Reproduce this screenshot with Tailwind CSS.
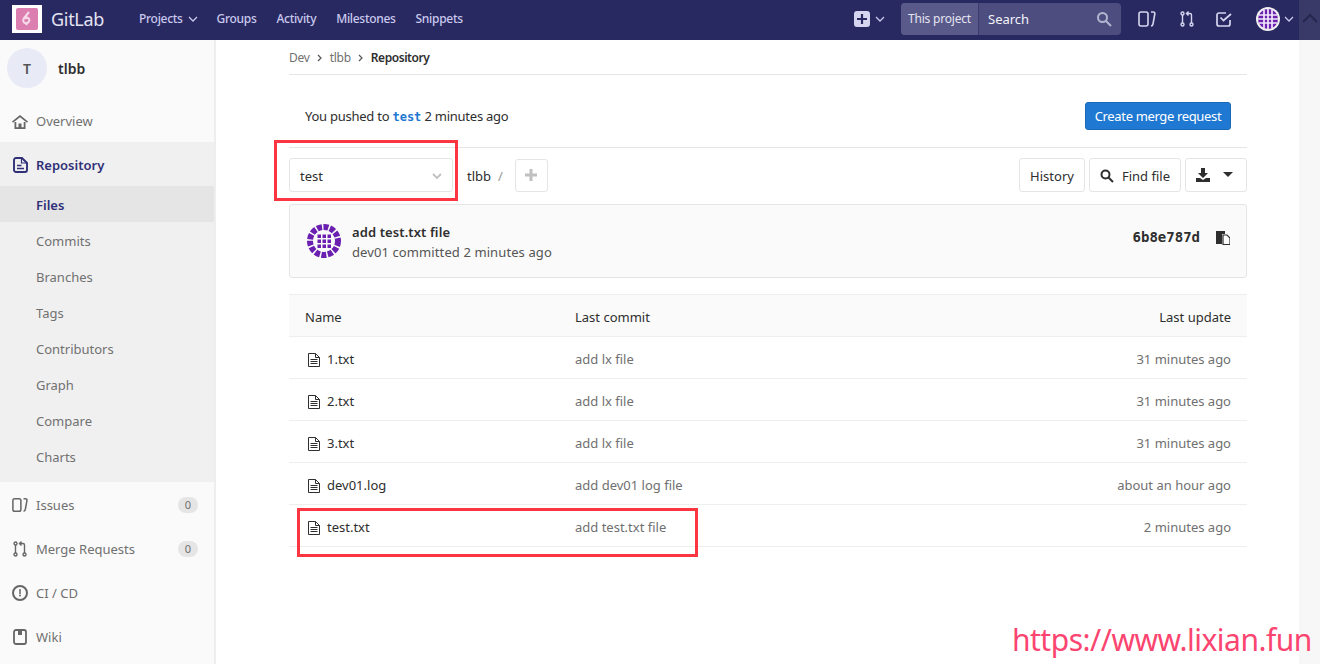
<!DOCTYPE html>
<html lang="en">

<head>
  <meta charset="UTF-8">
  <title>Files · tlbb · GitLab</title>
  <script src="https://cdn.jsdelivr.net/npm/@tailwindcss/browser@4"></script>
</head>

<body class="relative h-[664px] w-[1320px] overflow-hidden bg-white font-['Noto_Sans',sans-serif] text-[13px] text-[#2e2e2e]">

  <!-- top nav -->
  <header class="relative flex h-10 w-full items-center bg-[#292961] pb-[2px]">
    <div class="ml-3 flex h-[28px] w-[30px] items-center justify-center bg-white">
      <svg width="22" height="22" viewBox="0 0 22 22">
        <rect width="22" height="22" rx="2" fill="#dc7fb0" />
        <path d="M13 4 8 10c-2 3 0 6 3 5s3-4 1-5-3 1-3 1M10 17l2-3" fill="none" stroke="#f6dcea" stroke-width="2" />
      </svg>
    </div>
    <span class="ml-[9px] text-[18px] tracking-[-0.3px] text-[#e4e4f2]">GitLab</span>
    <nav class="ml-[35px] flex items-center text-[12px] font-medium tracking-[-0.3px] text-[#c9c9ee]">
      <span class="flex items-center gap-[5px]">Projects
        <svg width="10" height="10" viewBox="0 0 10 10" fill="none" stroke="#c9c9ee" stroke-width="1.3"><path d="M1 3l4 4 4-4" /></svg>
      </span>
      <span class="ml-[19px]">Groups</span>
      <span class="ml-[20px]">Activity</span>
      <span class="ml-[20px]">Milestones</span>
      <span class="ml-[20px]">Snippets</span>
    </nav>
    <div class="ml-auto mr-[26px] flex items-center">
      <div class="flex h-4 w-4 items-center justify-center rounded-[3px] bg-[#d5d5f0]">
        <svg width="12" height="12" viewBox="0 0 12 12" stroke="#292961" stroke-width="2.2"><path d="M6 1v10M1 6h10" /></svg>
      </div>
      <svg class="ml-[5px]" width="10" height="10" viewBox="0 0 10 10" fill="none" stroke="#c9c9ee" stroke-width="1.3"><path d="M1 3l4 4 4-4" /></svg>
      <div class="ml-[16px] flex h-8 w-[220px] items-center rounded-[4px] bg-[#4d4d7f]">
        <div class="flex h-full w-[78px] items-center justify-center rounded-l-[4px] border-r border-[#3b3b70] bg-[#5a5a8a] text-[12px] tracking-[-0.2px] text-[#e4e4f2]">This project</div>
        <span class="ml-[9px] pt-[1px] text-[13px] text-[#f4f4fa]">Search</span>
        <svg class="ml-auto mr-[9px]" width="16" height="16" viewBox="0 0 16 16" fill="none" stroke="#b5b5d2" stroke-width="2"><circle cx="6.5" cy="6.5" r="4.5" /><path d="M10 10l5 5" /></svg>
      </div>
      <svg class="ml-[17px]" width="18" height="16" viewBox="0 0 18 16" fill="none" stroke="#d5d5f0" stroke-width="1.6"><rect x="1" y="1" width="9" height="14" rx="2" /><path d="M13 1h2c1.500 0 2 .8 1.800 2L15 13c-.2 1.200-.8 2-2 2" /></svg>
      <svg class="ml-[24px]" width="14" height="16" viewBox="0 0 14 16" fill="none" stroke="#d5d5f0" stroke-width="1.4"><circle cx="2.500" cy="2.500" r="1.500" /><circle cx="2.500" cy="13.500" r="1.500" /><circle cx="11.500" cy="13.500" r="1.500" /><path d="M2.500 4v8M11.500 12V4c0-1-.5-1.500-1.500-1.500H7M8.500 .5l-2 2 2 2" /></svg>
      <svg class="ml-[22px]" width="16" height="16" viewBox="0 0 16 16" fill="none" stroke="#d5d5f0" stroke-width="1.7"><path d="M10 2H3a2 2 0 0 0-2 2v9a2 2 0 0 0 2 2h9a2 2 0 0 0 2-2V9" /><path d="M4.500 6.500l3 3L15 3" /></svg>
      <svg class="ml-[24px]" width="24" height="24" viewBox="0 0 24 24">
        <circle cx="12" cy="12" r="12" fill="#f0f0f0" />
        <circle cx="12" cy="12" r="10" fill="#6a1fb0" />
        <path d="M8 3v18M12 2v20M16 3v18M3 8h18M2 12h20M3 16h18" stroke="#f0e8f8" stroke-width="1.700" />
      </svg>
      <svg class="ml-[4px]" width="10" height="10" viewBox="0 0 10 10" fill="none" stroke="#c9c9ee" stroke-width="1.3"><path d="M1 3l4 4 4-4" /></svg>
    </div>
    <div class="absolute right-0 top-0 flex h-10 w-[21px] items-center justify-center bg-[#3a3a68] pb-[4px]">
      <svg width="16" height="10" viewBox="0 0 16 10" fill="none" stroke="#26264e" stroke-width="2"><path d="M1 9l7-7 7 7" /></svg>
    </div>
  </header>

  <div class="flex h-[624px]">
    <!-- sidebar -->
    <aside class="h-full w-[216px] shrink-0 border-r-2 border-[#eeeeee] bg-[#fafafa] text-[#707070]">
      <div class="flex h-[58px] items-center pb-[2px] pl-[7px]">
        <div class="flex h-10 w-10 items-center justify-center rounded-full bg-[#e8ebf5] text-[14px] font-semibold text-[#555555]">T</div>
        <span class="ml-[11px] text-[14px] font-semibold text-[#2e2e2e]">tlbb</span>
      </div>
      <div class="flex h-11 items-center pt-[3px]">
        <svg class="ml-[12px]" width="16" height="16" viewBox="0 0 16 16" fill="#666666"><path d="M8 1 0 7.500l1 1.200L8 3.200l7 5.500 1-1.200z" /><path d="M2.500 8v7h11V8h-1.800v5.300H9.500V9.500h-3v3.800H4.300V8z" /></svg>
        <span class="ml-2 pt-[1px]">Overview</span>
      </div>
      <div class="h-[340px] bg-[#f0f0f0]">
        <div class="flex h-11 items-center pt-[2px] font-semibold text-[#303078]">
          <svg class="ml-[13px]" width="15" height="16" viewBox="0 0 15 16" fill="none" stroke="#303078" stroke-width="1.900"><path d="M3 1h6l5 5v7a2 2 0 0 1-2 2H3a2 2 0 0 1-2-2V3a2 2 0 0 1 2-2z" /><path d="M8.500 1v5H14" stroke-width="1.200" /><path d="M4 8.500h4.500M4 11.500h7" stroke-width="1.400" /></svg>
          <span class="ml-2 pt-[2px]">Repository</span>
        </div>
        <div class="flex h-9 items-center bg-[#e5e5e5] pl-9 pt-[4px] font-semibold text-[#303078]">Files</div>
        <div class="flex h-9 items-center pl-9 pt-[4px]">Commits</div>
        <div class="flex h-9 items-center pl-9 pt-[4px]">Branches</div>
        <div class="flex h-9 items-center pl-9 pt-[4px]">Tags</div>
        <div class="flex h-9 items-center pl-9 pt-[4px]">Contributors</div>
        <div class="flex h-9 items-center pl-9 pt-[4px]">Graph</div>
        <div class="flex h-9 items-center pl-9 pt-[4px]">Compare</div>
        <div class="flex h-9 items-center pl-9 pt-[4px]">Charts</div>
      </div>
      <div class="flex h-11 items-center pt-[2px]">
        <svg class="ml-[12px]" width="16" height="16" viewBox="0 0 18 16" fill="none" stroke="#666666" stroke-width="1.700"><rect x="1" y="1" width="9" height="14" rx="2" /><path d="M13 1h2c1.500 0 2 .8 1.800 2L15 13c-.2 1.200-.8 2-2 2" /></svg>
        <span class="ml-2 pt-[2px]">Issues</span>
        <span class="ml-auto mr-[16px] flex h-4 w-5 items-center justify-center rounded-full bg-[#e5e5e5] text-[11px]">0</span>
      </div>
      <div class="flex h-11 items-center pt-[2px]">
        <svg class="ml-[13px]" width="14" height="16" viewBox="0 0 14 16" fill="none" stroke="#666666" stroke-width="1.400"><circle cx="2.500" cy="2.500" r="1.500" /><circle cx="2.500" cy="13.500" r="1.500" /><circle cx="11.500" cy="13.500" r="1.500" /><path d="M2.500 4v8M11.500 12V4c0-1-.5-1.500-1.500-1.500H7M8.500 .5l-2 2 2 2" /></svg>
        <span class="ml-[9px] pt-[2px]">Merge Requests</span>
        <span class="ml-auto mr-[16px] flex h-4 w-5 items-center justify-center rounded-full bg-[#e5e5e5] text-[11px]">0</span>
      </div>
      <div class="flex h-11 items-center pt-[2px]">
        <svg class="ml-[12px]" width="16" height="16" viewBox="0 0 16 16" fill="none" stroke="#666666" stroke-width="2"><circle cx="8" cy="8" r="7" /><path d="M8 4v5" stroke-width="1.500" /><circle cx="8" cy="10.500" r="1" fill="#666666" stroke="none" /></svg>
        <span class="ml-2 pt-[2px]">CI / CD</span>
      </div>
      <div class="flex h-11 items-center pt-[2px]">
        <svg class="ml-[13px]" width="14" height="16" viewBox="0 0 14 16" fill="none" stroke="#666666" stroke-width="1.800"><rect x="1" y="1" width="12" height="14" rx="2" /><path d="M5 1h4v5H5z" fill="#666666" stroke="none" /></svg>
        <span class="ml-[9px] pt-[2px]">Wiki</span>
      </div>
    </aside>

    <!-- main content -->
    <main class="w-[1083px] shrink-0 pl-[73px] pr-[52px]">
      <div class="flex h-[35px] items-center border-b border-[#e5e5e5] pt-[1px] text-[12px] tracking-[-0.25px] text-[#707070]">
        <span>Dev</span>
        <svg class="mx-[7px]" width="6" height="8" viewBox="0 0 6 8" fill="none" stroke="#555555" stroke-width="1.200"><path d="M1 1l3 3-3 3" /></svg>
        <span>tlbb</span>
        <svg class="mx-[7px]" width="6" height="8" viewBox="0 0 6 8" fill="none" stroke="#555555" stroke-width="1.200"><path d="M1 1l3 3-3 3" /></svg>
        <span class="font-semibold tracking-[-0.45px] text-[#2e2e2e]">Repository</span>
      </div>

      <div class="flex h-[73px] items-center border-b border-[#e5e5e5] px-4 pt-[10px] tracking-[-0.25px]">
        <span class="pt-[2px]">You pushed to <span class="font-['DejaVu_Sans_Mono',monospace] text-[12px] font-bold tracking-normal text-[#1f78d1]">test</span> 2 minutes ago</span>
        <div class="ml-auto flex h-7 w-[146px] items-center justify-center rounded-[3px] border border-[#1b69b6] bg-[#1f78d1] pt-[1px] tracking-[-0.35px] text-white">Create merge request</div>
      </div>

      <div class="mt-[10px] flex h-[34px] items-center">
        <div class="flex h-[34px] w-[164px] items-center rounded-[3px] border border-[#e5e5e5] px-[10px] pt-[4px]">
          test
          <svg class="ml-auto -translate-y-[1px]" width="10" height="8" viewBox="0 0 10 8" fill="none" stroke="#c0c0c0" stroke-width="1.800"><path d="M1 2l4 4 4-4" /></svg>
        </div>
        <span class="ml-[14px] pt-[4px]">tlbb</span>
        <span class="ml-[7px] pt-[4px] text-[#999999]">/</span>
        <div class="ml-[12px] flex h-[33px] w-[33px] items-center justify-center rounded-[3px] border border-[#e5e5e5]">
          <svg width="12" height="12" viewBox="0 0 12 12" stroke="#c0c0c0" stroke-width="3"><path d="M6 0v12M0 6h12" /></svg>
        </div>
        <div class="ml-auto flex h-[34px] w-[66px] items-center justify-center rounded-[3px] border border-[#e5e5e5] pt-[4px]">History</div>
        <div class="ml-1 flex h-[34px] w-[92px] items-center justify-center gap-2 rounded-[3px] border border-[#e5e5e5] pt-[4px]">
          <svg class="-translate-y-[1px]" width="14" height="14" viewBox="0 0 14 14" fill="none" stroke="#2e2e2e" stroke-width="2"><circle cx="5.500" cy="5.500" r="4" /><path d="M8.500 8.500l4.500 4.500" /></svg>
          Find file
        </div>
        <div class="ml-1 flex h-[34px] w-[62px] items-center justify-center gap-[13px] rounded-[3px] border border-[#e5e5e5] pr-1">
          <svg width="14" height="14" viewBox="0 0 14 14" fill="#2e2e2e"><path d="M5 0h4v5h3L7 10 2 5h3zM0 10h4l3 2 3-2h4v4H0z" /></svg>
          <svg width="10" height="6" viewBox="0 0 10 6" fill="#2e2e2e"><path d="M0 0h10L5 5z" /></svg>
        </div>
      </div>

      <div class="mt-[12px] flex h-[74px] items-center rounded-[3px] border border-[#e5e5e5] bg-[#fafafa] pl-[17px] pr-4">
        <svg width="34" height="34" viewBox="0 0 34 34">
          <circle cx="17" cy="17" r="14" fill="none" stroke="#6a1fb0" stroke-width="6" stroke-dasharray="5 1.500" />
          <path d="M10.500 10.500h3.500v3.500h-3.500zM15.500 10.500h3.500v3.500h-3.500zM20.500 10.500h3.500v3.500h-3.500zM10.500 15.500h3.500v3.500h-3.500zM15.500 15.500h3.500v3.500h-3.500zM20.500 15.500h3.500v3.500h-3.500zM10.500 20.500h3.500v3.500h-3.500zM15.500 20.500h3.500v3.500h-3.500zM20.500 20.500h3.500v3.500h-3.500z" fill="#6a1fb0" />
        </svg>
        <div class="ml-[11px] flex flex-col pt-[2px] tracking-[0.1px]">
          <span class="font-semibold leading-[20px]">add test.txt file</span>
          <span class="leading-[20px] text-[#555555]">dev01 committed 2 minutes ago</span>
        </div>
        <div class="mb-[8px] ml-auto flex items-center">
          <span class="font-['DejaVu_Sans_Mono',monospace] text-[14px] font-bold tracking-normal text-[#2e2e2e]">6b8e787d</span>
          <svg class="ml-[16px]" width="14" height="15" viewBox="0 0 14 15"><path d="M0 1h9v3H6v10H0z" fill="#2e2e2e" /><path d="M7 5h4l3 3v6.500H7z" fill="#fff" stroke="#2e2e2e" stroke-width="1.200" /></svg>
        </div>
      </div>

      <table class="mt-[16px] w-full border-collapse">
        <thead>
          <tr class="h-[42px] border-y border-[#eeeeee] bg-[#fafafa]">
            <th class="w-[286px] pl-4 pt-[5px] text-left font-normal">Name</th>
            <th class="pt-[5px] text-left font-normal">Last commit</th>
            <th class="pr-4 pt-[5px] text-right font-normal">Last update</th>
          </tr>
        </thead>
        <tbody>
          <tr class="h-[42px] border-b border-[#eeeeee]">
            <td class="pl-[19px] pt-[5px]">
              <div class="flex items-center gap-[7px]">
                <svg width="12" height="14" viewBox="0 0 12 14" fill="none" stroke="#2e2e2e"><path d="M.5.500h7l4 4v9H.5zM7.500.500v4h4M2.500 6.500h7M2.500 8.500h7M2.500 10.500h7" /></svg>1.txt
              </div>
            </td>
            <td class="pt-[5px] text-[#707070]">add lx file</td>
            <td class="pr-4 pt-[5px] text-right text-[#707070]">31 minutes ago</td>
          </tr>
          <tr class="h-[42px] border-b border-[#eeeeee]">
            <td class="pl-[19px] pt-[5px]">
              <div class="flex items-center gap-[7px]">
                <svg width="12" height="14" viewBox="0 0 12 14" fill="none" stroke="#2e2e2e"><path d="M.5.500h7l4 4v9H.5zM7.500.500v4h4M2.500 6.500h7M2.500 8.500h7M2.500 10.500h7" /></svg>2.txt
              </div>
            </td>
            <td class="pt-[5px] text-[#707070]">add lx file</td>
            <td class="pr-4 pt-[5px] text-right text-[#707070]">31 minutes ago</td>
          </tr>
          <tr class="h-[42px] border-b border-[#eeeeee]">
            <td class="pl-[19px] pt-[5px]">
              <div class="flex items-center gap-[7px]">
                <svg width="12" height="14" viewBox="0 0 12 14" fill="none" stroke="#2e2e2e"><path d="M.5.500h7l4 4v9H.5zM7.500.500v4h4M2.500 6.500h7M2.500 8.500h7M2.500 10.500h7" /></svg>3.txt
              </div>
            </td>
            <td class="pt-[5px] text-[#707070]">add lx file</td>
            <td class="pr-4 pt-[5px] text-right text-[#707070]">31 minutes ago</td>
          </tr>
          <tr class="h-[42px] border-b border-[#eeeeee]">
            <td class="pl-[19px] pt-[5px]">
              <div class="flex items-center gap-[7px]">
                <svg width="12" height="14" viewBox="0 0 12 14" fill="none" stroke="#2e2e2e"><path d="M.5.500h7l4 4v9H.5zM7.500.500v4h4M2.500 6.500h7M2.500 8.500h7M2.500 10.500h7" /></svg>dev01.log
              </div>
            </td>
            <td class="pt-[5px] text-[#707070]">add dev01 log file</td>
            <td class="pr-4 pt-[5px] text-right text-[#707070]">about an hour ago</td>
          </tr>
          <tr class="h-[42px] border-b border-[#eeeeee]">
            <td class="pl-[19px] pt-[5px]">
              <div class="flex items-center gap-[7px]">
                <svg width="12" height="14" viewBox="0 0 12 14" fill="none" stroke="#2e2e2e"><path d="M.5.500h7l4 4v9H.5zM7.500.500v4h4M2.500 6.500h7M2.500 8.500h7M2.500 10.500h7" /></svg>test.txt
              </div>
            </td>
            <td class="pt-[5px] text-[#707070]">add test.txt file</td>
            <td class="pr-4 pt-[5px] text-right text-[#707070]">2 minutes ago</td>
          </tr>
        </tbody>
      </table>
    </main>

    <!-- browser scrollbar -->
    <div class="h-full w-[21px] shrink-0 bg-[#f7f7f7]"></div>
  </div>

  <!-- annotations drawn over the screenshot -->
  <div class="absolute left-[274px] top-[140px] h-[61px] w-[184px] border-[3px] border-[#fb3640]"></div>
  <div class="absolute left-[297px] top-[508px] h-[49px] w-[401px] border-[3px] border-[#fb3640]"></div>
  <div class="absolute left-[1012px] top-[621px] whitespace-nowrap text-[30px] leading-[38px] tracking-[-0.5px] text-[#fb4570]">https://www.lixian.fun</div>

</body>

</html>
